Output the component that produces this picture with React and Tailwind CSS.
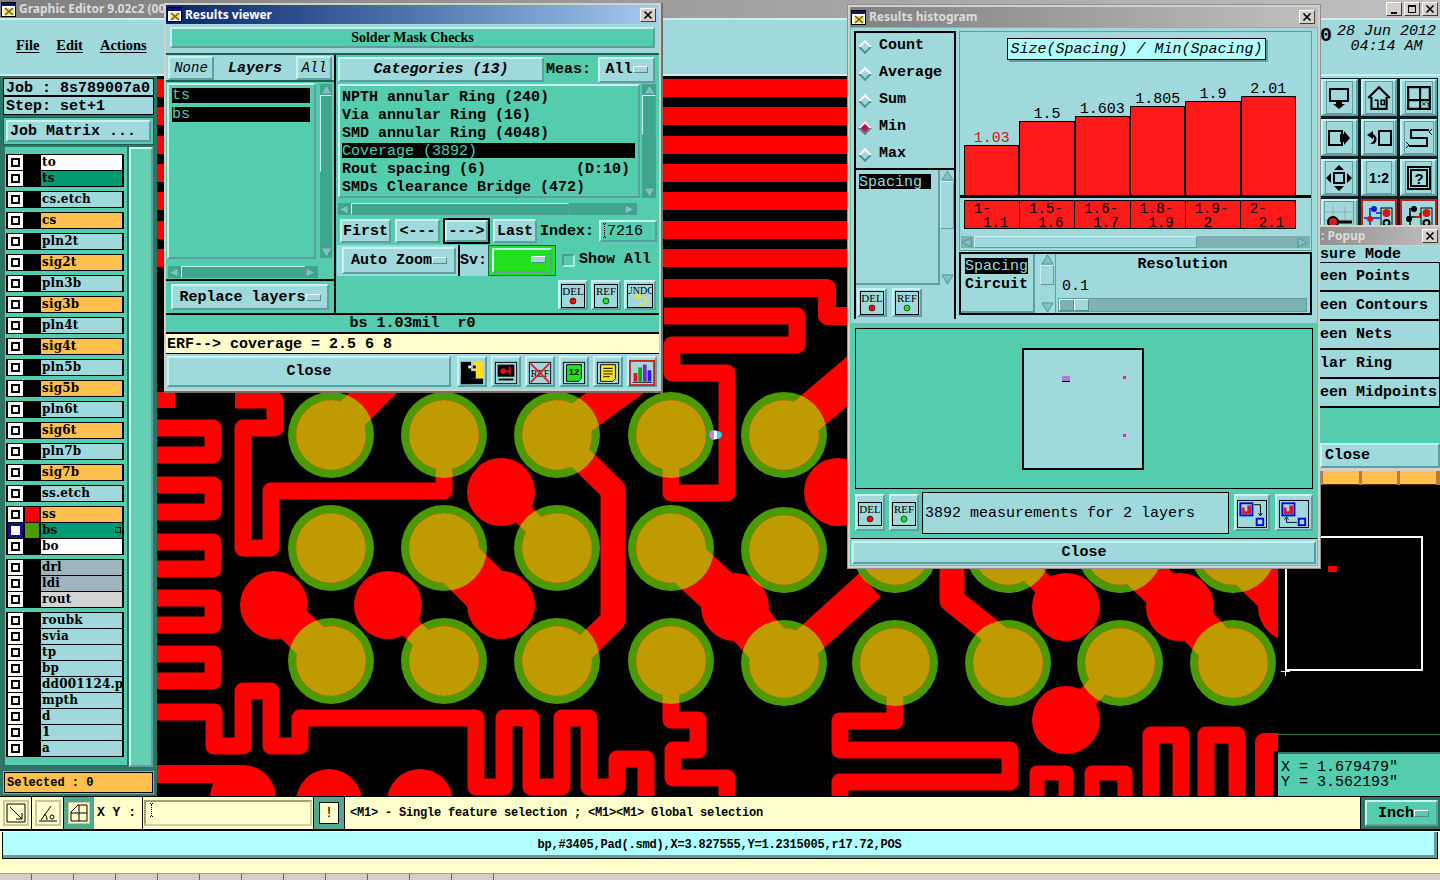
const raised = "border-2 border-t-[#c8f2f2] border-l-[#c8f2f2] border-r-[#5f9ea0] border-b-[#5f9ea0]";
const sunken = "border-2 border-t-[#4f9a8c] border-l-[#4f9a8c] border-r-[#a8ecdc] border-b-[#a8ecdc]";
const serif = "font-['Liberation_Serif',serif]";
const small = "text-[12px] tracking-[-0.2px]";

const LAYER_GROUPS = [
  [["to", "bg-white"], ["ts", "bg-[#009b73]"]],
  [["cs.etch", "bg-[#9fd9db]"]],
  [["cs", "bg-[#ffc04d]"]],
  [["pln2t", "bg-[#9fd9db]"]],
  [["sig2t", "bg-[#ffc04d]"]],
  [["pln3b", "bg-[#9fd9db]"]],
  [["sig3b", "bg-[#ffc04d]"]],
  [["pln4t", "bg-[#9fd9db]"]],
  [["sig4t", "bg-[#ffc04d]"]],
  [["pln5b", "bg-[#9fd9db]"]],
  [["sig5b", "bg-[#ffc04d]"]],
  [["pln6t", "bg-[#9fd9db]"]],
  [["sig6t", "bg-[#ffc04d]"]],
  [["pln7b", "bg-[#9fd9db]"]],
  [["sig7b", "bg-[#ffc04d]"]],
  [["ss.etch", "bg-[#9fd9db]"]],
  [["ss", "bg-[#ffc04d]", "bg-[#ff0000]"], ["bs", "bg-[#009b73]", "bg-[#4b9b00]", true], ["bo", "bg-white"]],
  [["drl", "bg-[#9fb4bc]"], ["ldi", "bg-[#9fb4bc]"], ["rout", "bg-[#d3d3d3]"]],
  [["roubk", "bg-[#9fd9db]"], ["svia", "bg-[#9fd9db]"], ["tp", "bg-[#9fd9db]"], ["bp", "bg-[#9fd9db]"], ["dd001124.phd", "bg-[#9fd9db]"], ["mpth", "bg-[#9fd9db]"], ["d", "bg-[#9fd9db]"], ["1", "bg-[#9fd9db]"], ["a", "bg-[#9fd9db]"]],
];

const BARS = [
  { top: "1.03", h: "h-[50px]", a: "1-", b: "1.1", red: true },
  { top: "1.5", h: "h-[74px]", a: "1.5-", b: "1.6" },
  { top: "1.603", h: "h-[79px]", a: "1.6-", b: "1.7" },
  { top: "1.805", h: "h-[89px]", a: "1.8-", b: "1.9" },
  { top: "1.9", h: "h-[94px]", a: "1.9-", b: "2" },
  { top: "2.01", h: "h-[99px]", a: "2-", b: "2.1" },
];

const RING_CENTERS = [
  [331, 435], [444, 435], [557, 435], [671, 435], [784, 435],
  [331, 548], [444, 548], [557, 548], [671, 548], [784, 550], [895, 550], [1008, 550], [1120, 550], [1233, 550],
  [331, 661], [444, 661], [557, 661], [671, 661], [784, 663], [895, 663], [1008, 663], [1120, 663], [1233, 663],
];

const SOLID_PADS = [[501, 492], [274, 605], [388, 605], [501, 605], [735, 607], [838, 492], [1066, 607], [1066, 720], [1180, 607], [1292, 607]];
const EDGE_PADS = [[243, 798], [329, 802], [420, 802]];

// traces: path, stroke width
const TRACES = [
  ["M157 428H213V455H157", 17],
  ["M157 485H213V512H157", 17],
  ["M157 542H213V569H157", 17],
  ["M157 598H213V625H157", 17],
  ["M157 654H213V681H157", 17],
  ["M157 400H175", 16],
  ["M235 400H275V428H243V548H271V491H444V435", 17],
  ["M157 774H240", 18],
  ["M157 712H214V746H243V691H271V746H300V718H476V787H504V718H531V787H562V718H589V787H617V759H646V796", 17],
  ["M331 435L398 368", 34],
  ["M557 435L640 375", 34],
  ["M557 435L613 490V620L557 676", 25],
  ["M501 492L557 548", 22],
  ["M274 605L331 661", 38],
  ["M388 605L444 661", 22],
  ["M444 548L501 605", 50],
  ["M671 548L735 607L784 663", 46],
  ["M784 663L870 585", 32],
  ["M784 435L870 362", 38],
  ["M664 288H827V316H850", 18],
  ["M664 316H797V345H672V373H727V493H671V435", 17],
  ["M671 661V720H698V750H673V778H727V796", 17],
  ["M895 663V721H840V750H1010V782H840V796", 17],
  ["M1037 796V773H1066V796", 15],
  ["M1092 796V773H1125V796", 15],
  ["M1151 796V735H1181V796", 17],
  ["M1206 796V735H1237V796", 17],
  ["M1264 796V742H1280", 18],
  ["M952 560V600L1008 645", 25],
  ["M1008 550L1066 607", 22],
  ["M1066 720L1120 663", 22],
  ["M1120 550L1180 607L1233 663", 40],
  ["M1233 550L1292 607", 46],
];

function RedLayer({ color }) {
  return (
    <g>
      {[79, 107, 136, 164, 192, 221, 249].map((y) => (
        <rect key={y} x="157" y={y} width="700" height="18" fill={color} />
      ))}
      {TRACES.map(([d, w]) => (
        <path key={d} d={d} fill="none" stroke={color} strokeWidth={w} strokeLinejoin="round" />
      ))}
      {RING_CENTERS.map(([x, y]) => (
        <circle key={`${x}-${y}`} cx={x} cy={y} r="35" fill={color} />
      ))}
      {SOLID_PADS.map(([x, y]) => (
        <circle key={`${x}-${y}`} cx={x} cy={y} r="34" fill={color} />
      ))}
      {EDGE_PADS.map(([x, y]) => (
        <circle key={`${x}-${y}`} cx={x} cy={y} r="33" fill={color} />
      ))}
    </g>
  );
}

function Board() {
  return (
    <svg viewBox="157 76 1121 720" className="block w-[1121px] h-[720px] bg-black">
      <defs>
        <clipPath id="rings">
          {RING_CENTERS.map(([x, y]) => (
            <circle key={`${x}-${y}`} cx={x} cy={y} r="43" />
          ))}
        </clipPath>
      </defs>
      {RING_CENTERS.map(([x, y]) => (
        <circle key={`${x}-${y}`} cx={x} cy={y} r="43" fill="#4b9b00" />
      ))}
      <RedLayer color="#ff0000" />
      <g clipPath="url(#rings)">
        <RedLayer color="#bf9a00" />
      </g>
      <circle cx="714" cy="435" r="5" fill="#c080f0" />
      <rect x="714" y="431" width="3" height="8" fill="#fff" />
      <path d="M717 431a5 4 0 0 1 0 8z" fill="#20e0f0" />
    </svg>
  );
}

function Arrow({ dir, className = "" }) {
  const d = { up: "M7 1L13 11H1z", down: "M7 11L1 1H13z", left: "M1 6L11 1V11z", right: "M11 6L1 1V11z" }[dir];
  return (
    <svg viewBox="0 0 14 12" className={`block w-[13px] h-[11px] shrink-0 ${className}`}>
      <path d={d} fill="#7cc4c0" stroke="#4f8f8f" strokeWidth="1" />
    </svg>
  );
}

function VScroll({ className = "", thumb = "flex-1" }) {
  return (
    <div className={`flex flex-col items-center w-[14px] bg-[#3fa68e] ${className}`}>
      <Arrow dir="up" />
      <div className={`w-full border border-t-[#c8f2f2] border-l-[#c8f2f2] border-r-[#5f9ea0] border-b-[#5f9ea0] ${thumb}`} />
      <div className="flex-1" />
      <Arrow dir="down" />
    </div>
  );
}

function HScroll({ className = "", thumb = "w-full", track = "bg-[#3fa68e]" }) {
  return (
    <div className={`flex items-center h-[12px] ${track} ${className}`}>
      <Arrow dir="left" />
      <div className="flex-1 h-full flex">
        <div className={`h-full border border-t-[#c8f2f2] border-l-[#c8f2f2] border-r-[#5f9ea0] border-b-[#5f9ea0] ${thumb}`} />
      </div>
      <Arrow dir="right" />
    </div>
  );
}

function Btn({ className = "", children }) {
  return <div className={`flex items-center justify-center pt-[2px] whitespace-pre bg-[#9fd9db] ${raised} ${className}`}>{children}</div>;
}

function OptionMark({ className = "bg-[#9fd9db]" }) {
  return <div className={`w-[15px] h-[7px] mb-[2px] border border-t-white border-l-white border-r-[#4f8f8f] border-b-[#4f8f8f] ${className}`} />;
}

function IBeam({ className = "h-[15px]" }) {
  return <div className={`w-[3px] shrink-0 border-y border-black border-dotted ${className}`}><div className="w-[1px] h-full ml-[1px] border-l border-dotted border-black" /></div>;
}

function CloseBox() {
  return (
    <div className="flex items-center justify-center w-[16px] h-[14px] bg-[#d4d0c8] border border-t-white border-l-white border-r-[#404040] border-b-[#404040]">
      <svg viewBox="0 0 10 10" className="block w-[10px] h-[10px]"><path d="M1.5 1.5l7 7M8.5 1.5l-7 7" stroke="#000" strokeWidth="1.6" /></svg>
    </div>
  );
}

function AppGlyph() {
  return (
    <svg viewBox="0 0 15 15" className="block w-[15px] h-[15px] shrink-0">
      <rect x="0.5" y="0.5" width="14" height="14" fill="#fff" stroke="#000" />
      <rect x="1" y="1" width="13" height="3" fill="#10107a" />
      <rect x="3" y="6" width="10" height="7" fill="#e8e08a" />
      <path d="M4 6l8 7M12 6l-8 7" stroke="#706000" strokeWidth="1.4" />
    </svg>
  );
}

function TitleBar({ text, active, className = "" }) {
  return (
    <div className={`flex items-center gap-[3px] shrink-0 pl-[1px] pr-[3px] ${active ? "bg-linear-to-r from-[#0a246a] to-[#a6caf0] text-white" : "bg-linear-to-r from-[#808080] to-[#c0c0c0] text-[#dcdcdc]"} ${className}`}>
      <AppGlyph />
      <span className="flex-1 font-['Noto_Sans',sans-serif] text-[12px] leading-[16px] font-bold whitespace-nowrap">{text}</span>
      <CloseBox />
    </div>
  );
}

function DelIcon({ label = "DEL", dot = "#ff0000" }) {
  return (
    <svg viewBox="0 0 24 24" className="block w-[24px] h-[24px]">
      <rect x="0.5" y="0.5" width="23" height="23" fill="#9fd9db" stroke="#000" />
      <text x="12" y="11" textAnchor="middle" fontSize="11" fontFamily="'Liberation Serif', serif" fontWeight="400" fill="#000">{label}</text>
      <circle cx="12" cy="17" r="3" fill={dot} stroke="#000" strokeWidth="0.6" />
    </svg>
  );
}

function UndoIcon() {
  return (
    <svg viewBox="0 0 26 24" className="block w-[26px] h-[24px]">
      <rect x="0.5" y="0.5" width="25" height="23" fill="#9fd9db" stroke="#000" />
      <text x="13" y="10" textAnchor="middle" fontSize="10" fontFamily="'Liberation Serif', serif" fontWeight="400" fill="#000">UNDO</text>
      <path d="M10 13h6a3 3 0 0 1 0 7h-4M12 11l-3 2 3 2" fill="none" stroke="#ffe020" strokeWidth="1.6" />
    </svg>
  );
}

function HistSwapIcon({ back }) {
  return (
    <svg viewBox="0 0 32 30" className="block w-[30px] h-[28px]">
      <rect x="0.5" y="0.5" width="31" height="29" fill="#9fd9db" stroke="#000" />
      <rect x="3.5" y="3.5" width="13" height="13" fill="#9fd9db" stroke="#0000d0" strokeWidth="2" />
      <path d="M5 15V8h3v4h3V6h4v9z" fill="#e01030" />
      <rect x="21" y="20" width="7" height="7" fill="none" stroke="#0000d0" strokeWidth="2" />
      {back ? (
        <path d="M19 24H8V20M6 21l2-3 2 3" fill="none" stroke="#000" />
      ) : (
        <path d="M18 5h7v12M23 14l2 3 2-3" fill="none" stroke="#000" />
      )}
    </svg>
  );
}

function ToolGlyph({ kind }) {
  const shapes = {
    person: (
      <>
        <rect x="2" y="2" width="11" height="24" fill="#000" />
        <rect x="15" y="2" width="11" height="20" fill="#ffe020" />
        <rect x="2" y="20" width="24" height="6" fill="#000" />
        <rect x="10" y="6" width="3" height="3" fill="#fff" />
        <rect x="15" y="6" width="3" height="3" fill="#000" />
        <rect x="10" y="12" width="8" height="8" fill="#000" />
      </>
    ),
    redbox: (
      <>
        <rect x="2.5" y="2.5" width="23" height="23" fill="#9fd9db" stroke="#000" />
        <rect x="5" y="5" width="18" height="13" fill="#000" />
        <circle cx="11" cy="12" r="3" fill="#ff0000" />
        <path d="M14 12h4M18 7v9" stroke="#ff0000" strokeWidth="2" />
        <path d="M6 21h16" stroke="#000" strokeWidth="2" />
      </>
    ),
    ref: (
      <>
        <rect x="2.5" y="2.5" width="23" height="23" fill="#9fd9db" stroke="#000" />
        <text x="14" y="18" textAnchor="middle" fontSize="11" fontFamily="'Liberation Serif', serif" fontWeight="400">REF</text>
        <path d="M4 4l20 20M24 4L4 24" stroke="#e02020" strokeWidth="2" />
      </>
    ),
    note: (
      <>
        <rect x="2.5" y="2.5" width="23" height="23" fill="#9fd9db" stroke="#000" />
        <path d="M6 5h16v15l-3 3H6z" fill="#20e020" stroke="#000" />
        <text x="14" y="16" textAnchor="middle" fontSize="10" fontFamily="'Liberation Sans', sans-serif" fontWeight="700">12</text>
      </>
    ),
    list: (
      <>
        <rect x="2.5" y="2.5" width="23" height="23" fill="#9fd9db" stroke="#000" />
        <path d="M6 5h16v15l-3 3H6z" fill="#ffe020" stroke="#000" />
        <path d="M9 9h10M9 12h10M9 15h10M9 18h7" stroke="#000" />
      </>
    ),
    chart: (
      <>
        <rect x="1" y="1" width="26" height="26" fill="#9fd9db" stroke="#d02020" strokeWidth="2" />
        <rect x="5" y="14" width="4" height="9" fill="#e01030" />
        <rect x="10" y="8" width="4" height="15" fill="#10a010" />
        <rect x="15" y="5" width="4" height="18" fill="#8020c0" />
        <rect x="20" y="11" width="4" height="12" fill="#2020e0" />
        <path d="M4 24h21" stroke="#000" />
      </>
    ),
  };
  return <svg viewBox="0 0 28 28" className="block w-[26px] h-[26px]">{shapes[kind]}</svg>;
}

function LayerRow({ name, bg, swatch, active }) {
  return (
    <div className="flex items-center h-[15px]">
      <div className={`flex items-center justify-center w-[15px] h-[15px] ml-[2px] ${active ? "bg-[#101090]" : "bg-white"}`}>
        <div className={`flex items-center justify-center w-[9px] h-[9px] ${active ? "bg-white" : "bg-black"}`}>
          {!active && <div className="w-[5px] h-[5px] bg-white" />}
        </div>
      </div>
      <div className={`w-[14px] h-[15px] ml-[2px] ${swatch || "bg-black"}`} />
      <div className={`relative w-[81px] h-[15px] ml-[2px] pl-[1px] overflow-hidden font-['DejaVu_Serif',serif] text-[12px] tracking-[0.2px] leading-[15px] whitespace-nowrap ${bg}`}>
        {name}
        {active && <span className="absolute right-[1px] top-[4px] w-[6px] h-[6px] border border-black" />}
      </div>
    </div>
  );
}

function LeftPanel() {
  return (
    <div className="flex flex-col w-[157px] h-[720px] bg-[#2f7565] text-[15px]">
      <div className="mx-[3px] mt-[2px] border border-black bg-[#9fd9db]">
        <div className="h-[18px] pl-[2px] leading-[20px] border-b-2 border-black whitespace-pre">Job : 8s789007a0</div>
        <div className="h-[17px] pl-[2px] pt-[2px] leading-[15px] whitespace-pre">Step: set+1</div>
      </div>
      <div className="mx-[3px] mt-[2px] p-[2px] h-[28px] bg-[#53cdad] border border-[#1f5f50]">
        <Btn className="h-full justify-start pl-[2px]">Job Matrix ...</Btn>
      </div>
      <div className="flex flex-1 mt-[2px] ml-[5px] mr-[4px]">
        <div className="flex flex-col gap-[4px] w-[122px] h-[618px] pt-[7px] px-[1px] bg-[#53cdad]">
          {LAYER_GROUPS.map((group, i) => (
            <div key={i} className="flex flex-col shrink-0 gap-[1px] py-[1px] bg-black w-[118px]">
              {group.map(([name, bg, swatch, active]) => (
                <LayerRow key={name} name={name} bg={bg} swatch={swatch} active={active} />
              ))}
            </div>
          ))}
        </div>
        <div className={`flex-1 h-[620px] ml-[2px] bg-[#64cfb2] ${raised}`} />
      </div>
      <div className="mx-[3px] mb-[2px] p-[1px] h-[23px] bg-[#53cdad]">
        <div className="flex items-center h-full pl-[2px] border border-black bg-[#ffc04d] text-[12px]">Selected : 0</div>
      </div>
    </div>
  );
}

function RightIcon({ children }) {
  return (
    <div className={`flex items-center justify-center h-[37px] bg-[#9fd9db] ${raised}`}>
      <div className="flex items-center justify-center w-full h-full m-[3px] border border-[#5f9ea0]">{children}</div>
    </div>
  );
}

function RightGrid() {
  const stroke = { fill: "none", stroke: "#000", strokeWidth: 2 };
  return (
    <div className="grid grid-cols-3 gap-[3px] w-[118px] h-[147px] overflow-hidden bg-[#102020] p-[1px]">
      <RightIcon><svg viewBox="0 0 24 24" className="w-[24px] h-[24px]"><path d="M3 3h18v12H3z" {...stroke} /><path d="M9 14h6v4h3l-6 5-6-5h3z" /></svg></RightIcon>
      <RightIcon><svg viewBox="0 0 24 24" className="w-[26px] h-[26px]"><path d="M2 12L12 2l10 10M5 11v11h14V11" {...stroke} /><path d="M8 14h3v8M14 14h3v4h-3z" {...stroke} strokeWidth="1.4" /></svg></RightIcon>
      <RightIcon><svg viewBox="0 0 24 24" className="w-[26px] h-[26px]"><path d="M2 2h20v20H2zM13 2v20M2 14h20" {...stroke} /><path d="M15 16l3 3M18 16l-3 3M19 16l1.5 1.5 1.5-1.5M20.5 17.5V20" stroke="#000" strokeWidth="0.8" fill="none" /></svg></RightIcon>
      <RightIcon><svg viewBox="0 0 24 24" className="w-[24px] h-[24px]"><path d="M2 5h13v14H2z" {...stroke} /><path d="M13 8h4V5l6 7-6 7v-3h-4z" /></svg></RightIcon>
      <RightIcon><svg viewBox="0 0 28 24" className="w-[28px] h-[24px]"><path d="M14 5h12v14H14z" {...stroke} /><path d="M8 5L2 9l6 4v-2c2 0 2 4-3 7h4c3-2 4-8-1-10z" /></svg></RightIcon>
      <RightIcon><svg viewBox="0 0 28 24" className="w-[28px] h-[24px]"><path d="M24 4H6v8h16v8H4" {...stroke} /><path d="M27 3l-3 3 3 3M1 16l3 3-3 3" fill="none" stroke="#000" /></svg></RightIcon>
      <RightIcon><svg viewBox="0 0 26 26" className="w-[26px] h-[26px]"><path d="M8 8h10v10H8z" {...stroke} /><path d="M13 0l5 5H8zM13 26l5-5H8zM0 13l5-5v10zM26 13l-5-5v10z" /></svg></RightIcon>
      <RightIcon><span className="font-['Liberation_Sans',sans-serif] text-[14px] font-bold leading-none">1:2</span></RightIcon>
      <RightIcon><svg viewBox="0 0 24 24" className="w-[24px] h-[24px]"><path d="M1 1h22v22H1zM4 4h16v16H4z" {...stroke} /><text x="12" y="18" textAnchor="middle" fontSize="15" fontFamily="'Liberation Sans', sans-serif" fontWeight="700">?</text></svg></RightIcon>
      <RightIcon><svg viewBox="0 0 28 24" className="w-[28px] h-[24px]"><path d="M0 6h28M0 14h28M8 0v24M20 0v24" stroke="#8fb0b0" /><circle cx="8" cy="16" r="5" fill="#d02020" stroke="#000" strokeWidth="2" /><path d="M13 16h14" stroke="#000" strokeWidth="3" /></svg></RightIcon>
      <div className="flex items-center justify-center h-[37px] bg-[#9fd9db] border-2 border-[#c02020]"><svg viewBox="0 0 30 26" className="w-[30px] h-[26px]"><path d="M6 3v20M0 13h16M12 8h8" stroke="#0020d0" strokeWidth="1.5" /><circle cx="6" cy="14" r="3" fill="#e01010" /><circle cx="10" cy="4" r="3" fill="#1010e0" /><rect x="17" y="3" width="11" height="22" fill="#9fd9db" stroke="#000" /><circle cx="22.5" cy="8" r="4" fill="#e01010" /><circle cx="22.5" cy="18" r="3" fill="none" stroke="#000" strokeWidth="2" /></svg></div>
      <div className="flex items-center justify-center h-[37px] bg-[#9fd9db] border-2 border-[#c02020]"><svg viewBox="0 0 30 26" className="w-[30px] h-[26px]"><path d="M6 3v20M3 12h10" stroke="#000" strokeWidth="1.5" /><circle cx="5" cy="14" r="3" fill="#000" /><circle cx="10" cy="4" r="3" fill="#000" /><path d="M11 12h5V8" stroke="#e01010" strokeWidth="2" fill="none" /><rect x="17" y="3" width="11" height="22" fill="#9fd9db" stroke="#000" /><circle cx="22.5" cy="8" r="4" fill="#e01010" /><circle cx="22.5" cy="18" r="3" fill="none" stroke="#000" strokeWidth="2" /></svg></div>
    </div>
  );
}

function RightPanel() {
  return (
    <div className="flex flex-col w-[162px] h-[720px]">
      <div className="flex flex-col flex-1 bg-[#9fd9db] border-t-2 border-[#9fd9db] pl-[42px]">
        <RightGrid />
        <div className="flex-1" />
        <div className="flex gap-[3px] h-[15px] bg-[#c07a30] pl-[3px] pr-[4px]">
          <div className="flex-1 bg-[#ffc04d] border-b border-[#503000]" />
          <div className="flex-1 bg-[#ffc04d] border-b border-[#503000]" />
          <div className="flex-1 bg-[#ffc04d] border-b border-[#503000]" />
        </div>
      </div>
      <div className="relative h-[267px] shrink-0 bg-black border-b-0">
        <div className="absolute left-[7px] top-[51px] w-[138px] h-[135px] border-2 border-white" />
        <div className="absolute left-[50px] top-[81px] w-[9px] h-[6px] bg-[#ff0000]" />
        <div className="absolute left-[3px] top-[186px] w-[9px] h-[1px] bg-white" />
        <div className="absolute left-[7px] top-[182px] w-[1px] h-[9px] bg-white" />
        <div className="absolute left-0 right-0 top-[249px] h-[1px] bg-[#2f7565]" />
      </div>
      <div className="flex flex-col justify-center h-[44px] shrink-0 pl-[3px] border-t-2 border-[#2f7565] bg-[#53cdad] text-[15px] font-normal leading-[15px] whitespace-pre">
        <div>X = 1.679479"</div>
        <div>Y = 3.562193"</div>
      </div>
    </div>
  );
}

function ResultsViewer() {
  return (
    <div className="absolute left-[164px] top-[3px] flex flex-col w-[499px] h-[390px] p-[2px] bg-[#d4d0c8] border-r-2 border-b-2 border-[#707070]">
      <TitleBar text="Results viewer" active className="h-[19px]" />
      <div className="flex flex-col flex-1 bg-[#9fd9db]">
        <div className="h-[31px] shrink-0 p-[4px] pt-[3px] pb-[5px] bg-[#9fd9db] border-b-2 border-[#1f5f50]">
          <div className={`flex items-center justify-center h-full bg-[#53cdad] ${raised} ${serif} text-[14px]`}>Solder Mask Checks</div>
        </div>
        <div className="flex h-[258px] shrink-0">
          <div className="flex flex-col w-[170px] bg-[#53cdad] border-r-2 border-black">
            <div className="flex h-[27px] shrink-0 bg-[#9fd9db] border-b-2 border-[#1f5f50] px-[2px] items-center gap-[3px] italic font-normal">
              <Btn className="w-[46px] h-[24px] text-[14px]">None</Btn>
              <div className="flex-1 pt-[4px] text-center font-bold text-[15px]">Layers</div>
              <Btn className="w-[36px] h-[24px] text-[14px]">All</Btn>
            </div>
            <div className="flex flex-1 pl-[1px] pt-[1px]">
              <div className={`flex flex-col w-[150px] h-[176px] pl-[3px] pr-[4px] pt-[3px] gap-[4px] ${raised} border-l-[#3fa68e] border-t-[#3fa68e] font-normal`}>
                <div className="h-[15px] leading-[15px] bg-black text-[#53cdad]">ts</div>
                <div className="h-[15px] leading-[15px] bg-black text-[#53cdad]">bs</div>
              </div>
              <VScroll className="ml-[3px] mr-[1px] h-[176px] border border-[#53cdad]" thumb="flex-1" />
            </div>
            <HScroll className="w-[150px] ml-[2px] mb-[1px] h-[12px] shrink-0" thumb="w-full" />
            <div className="h-[34px] shrink-0 border-t-2 border-black px-[5px] py-[3px]">
              <Btn className="h-full justify-between px-[4px]"><span>Replace layers</span><OptionMark /></Btn>
            </div>
          </div>
          <div className="flex flex-col flex-1 bg-[#53cdad]">
            <div className="flex items-center h-[29px] shrink-0 pl-[2px] pr-[4px]">
              <Btn className="w-[206px] h-[25px] italic">Categories (13)</Btn>
              <span className="ml-[2px] pt-[2px] w-[52px]">Meas:</span>
              <Btn className="flex-1 h-[26px] justify-between px-[4px]"><span>All</span><OptionMark /></Btn>
            </div>
            <div className="flex h-[114px] shrink-0 pl-[2px] pr-[3px]">
              <div className={`flex-1 pl-[2px] pt-[3px] ${raised} border-l-[#3fa68e] border-t-[#3fa68e] leading-[18px] whitespace-pre`}>
                <div>NPTH annular Ring (240)</div>
                <div>Via annular Ring (16)</div>
                <div>SMD annular Ring (4048)</div>
                <div className="bg-black text-[#53cdad] font-normal w-[293px] h-[15px] mb-[3px]">Coverage (3892)</div>
                <div>Rout spacing (6)          (D:10)</div>
                <div>SMDs Clearance Bridge (472)</div>
              </div>
              <VScroll className="ml-[2px]" thumb="h-[40px]" />
            </div>
            <HScroll className="shrink-0 ml-[2px] mt-[5px] mr-[22px]" thumb="w-[80%]" />
            <div className="flex items-center h-[28px] gap-[3px] shrink-0 pl-[4px] mt-[2px]">
              <Btn className="w-[51px] h-[24px]">First</Btn>
              <Btn className="w-[45px] h-[24px] ml-[1px]">{"<---"}</Btn>
              <div className="w-[47px] h-[26px] border-2 border-black"><Btn className="h-full">---&gt;</Btn></div>
              <Btn className="w-[44px] h-[24px]">Last</Btn>
              <span className="pt-[2px] whitespace-pre">Index:</span>
              <div className={`flex items-start gap-[1px] w-[58px] h-[22px] ml-[2px] ${raised} border-l-[#3fa68e] border-t-[#3fa68e] pl-[2px] pt-[1px] leading-[17px] font-normal`}><IBeam />7216</div>
            </div>
            <div className="flex items-center h-[31px] shrink-0 pl-[1px]">
              <div className="flex items-center h-full bg-[#9fd9db] border-r-2 border-black pr-[2px] pl-[5px]">
                <Btn className="w-[114px] h-[27px] justify-between px-[4px]"><span>Auto Zoom</span><OptionMark /></Btn>
              </div>
              <span className="flex items-center h-full w-[28px] pt-[2px] bg-[#9fd9db]">Sv:</span>
              <div className="flex items-center justify-center w-[68px] h-full bg-[#20e020] border border-[#1f5f50]">
                <div className={`flex items-center justify-end w-[60px] h-[25px] pr-[4px] ${raised} bg-[#20e020]`}><OptionMark /></div>
              </div>
              <div className={`w-[13px] h-[13px] ml-[6px] ${sunken}`} />
              <span className="ml-[4px] whitespace-pre">Show All</span>
            </div>
            <div className="flex flex-1 justify-end items-center gap-[3px] pr-[3px]">
              <Btn className="w-[30px] h-[30px] pt-0"><DelIcon /></Btn>
              <Btn className="w-[30px] h-[30px] pt-0"><DelIcon label="REF" dot="#20e020" /></Btn>
              <Btn className="w-[32px] h-[30px] pt-0"><UndoIcon /></Btn>
            </div>
          </div>
        </div>
        <div className="flex items-center justify-center h-[21px] shrink-0 pt-[2px] bg-[#53cdad] border-y-2 border-black whitespace-pre">bs 1.03mil  r0</div>
        <div className="flex items-center h-[20px] shrink-0 pl-[1px] pt-[3px] bg-[#ffffcc] border-b border-black whitespace-pre">ERF--&gt; coverage = 2.5 6 8</div>
        <div className="flex flex-1 items-center gap-[4px] pl-[1px] pr-[2px]">
          <Btn className="w-[288px] h-[31px] mr-[2px]">Close</Btn>
          {["person", "redbox", "ref", "note", "list", "chart"].map((kind) => (
            <Btn key={kind} className="w-[30px] h-[31px] pt-0"><ToolGlyph kind={kind} /></Btn>
          ))}
        </div>
      </div>
    </div>
  );
}

function Radio({ label, checked }) {
  return (
    <div className="flex items-center shrink-0 h-[27px] pl-[4px] gap-[9px] whitespace-pre">
      <div className={`w-[10px] h-[10px] rotate-45 border-2 border-t-white border-l-white border-r-[#4f8f8f] border-b-[#4f8f8f] ${checked ? "bg-[#c0104e]" : "bg-[#9fd9db]"}`} />
      {label}
    </div>
  );
}

function ResultsHistogram() {
  return (
    <div className="absolute left-[847px] top-[4px] flex flex-col w-[474px] h-[565px] p-[2px] bg-[#d4d0c8] border border-[#909090]">
      <TitleBar text="Results histogram" className="h-[20px]" />
      <div className="flex flex-col flex-1 bg-[#53cdad] p-[1px]">
        <div className="flex h-[293px] shrink-0 bg-[#9fd9db] pl-[3px] pr-[5px] pt-[3px] gap-[3px]">
          <div className="flex flex-col w-[102px] border-2 border-black border-b-0 h-[288px]">
            <div className="flex flex-col h-[137px] shrink-0 border-b-2 border-black">
              <Radio label="Count" />
              <Radio label="Average" />
              <Radio label="Sum" />
              <Radio label="Min" checked />
              <Radio label="Max" />
            </div>
            <div className="flex h-[115px] shrink-0">
              <div className={`flex-1 pl-[3px] pt-[4px] ${raised} border-t-0 border-l-0`}>
                <div className="w-[72px] h-[15px] leading-[17px] bg-black text-[#9fd9db] font-normal">Spacing</div>
              </div>
              <VScroll className="bg-[#9fd9db]" thumb="flex-1" />
            </div>
            <div className="flex flex-1 items-center gap-[5px] pl-[1px]">
              <Btn className="w-[30px] h-[29px] pt-0"><DelIcon /></Btn>
              <Btn className="w-[30px] h-[29px] pt-0"><DelIcon label="REF" dot="#20e020" /></Btn>
            </div>
          </div>
          <div className="flex flex-col flex-1 h-[288px]">
            <div className="flex flex-col h-[220px] shrink-0 border border-[#5f9ea0] px-[4px]">
              <div className="self-center ml-[2px] mt-[6px] w-[259px] h-[22px] flex items-center justify-center pt-[2px] border border-black bg-[#b2ffff] italic font-normal text-[15px] shadow-[2px_2px_0_#5f9ea0] whitespace-pre shrink-0">Size(Spacing) / Min(Spacing)</div>
              <div className="flex items-end h-[135px] shrink-0 w-[332px]">
                {BARS.map((bar) => (
                  <div key={bar.top} className="flex flex-col items-center flex-1">
                    <span className={`leading-[12px] font-normal ${bar.red ? "text-[#e01010]" : ""}`}>{bar.top}</span>
                    <div className={`w-full border border-black border-b-0 bg-[#ff1a1a] ${bar.h}`} />
                  </div>
                ))}
              </div>
              <div className="-mx-[4px] h-[3px] bg-black shrink-0" />
              <div className="flex shrink-0 w-[332px] h-[29px] mt-[2px] border border-black bg-[#ff1a1a]">
                {BARS.map((bar) => (
                  <div key={bar.b} className="flex-1 h-[27px] border-r border-black last:border-r-0 text-[14px] font-normal leading-[14px] pl-[9px] pt-[1px] whitespace-pre">
                    <div>{bar.a}</div>
                    <div className="ml-[9px]">{bar.b}</div>
                  </div>
                ))}
              </div>
              <HScroll className="-mx-[3px] mt-[7px] shrink-0" track="bg-[#7fb0b2]" thumb="w-[69%] bg-[#9fd9db]" />
            </div>
            <div className="flex h-[63px] mt-[1px] border-2 border-black">
              <div className={`w-[74px] pl-[4px] pt-[4px] leading-[18px] ${raised} border-l-0 border-t-0`}>
                <div className="bg-black text-[#9fd9db] font-normal w-[63px] h-[16px] leading-[17px] mb-[2px]">Spacing</div>
                <div>Circuit</div>
              </div>
              <VScroll className="ml-[5px] mr-[1px] bg-[#9fd9db]" thumb="flex-1" />
              <div className="flex flex-col flex-1 pl-[2px] pr-[3px] border-l border-[#5f9ea0]">
                <div className="text-center leading-[19px] pt-[1px]">Resolution</div>
                <div className="pl-[4px] leading-[20px] mt-[2px] pt-[1px] font-normal">0.1</div>
                <div className="flex h-[14px] mt-[1px] bg-[#7fb0b2] border border-[#5f9ea0]">
                  <div className="w-[15px] h-full border border-t-white border-l-white border-r-[#4f8f8f] border-b-[#4f8f8f]" />
                  <div className="w-[15px] h-full border border-t-white border-l-white border-r-[#4f8f8f] border-b-[#4f8f8f] bg-[#9fd9db]" />
                </div>
              </div>
            </div>
          </div>
        </div>
        <div className="flex flex-col flex-1 bg-[#53cdad] border-t-2 border-[#9fd9db]">
          <div className="h-[161px] shrink-0 mx-[4px] mt-[5px] pt-[1px] pr-[2px] border border-black flex items-center justify-center">
            <div className="relative w-[122px] h-[122px] border-2 border-black bg-[#9fd9db]">
              <div className="absolute left-[38px] top-[26px] w-[8px] h-[6px] border-b border-black bg-[#c040d0]/60" />
              <div className="absolute left-[99px] top-[26px] w-[3px] h-[3px] bg-[#d020d0]" />
              <div className="absolute left-[99px] top-[84px] w-[3px] h-[3px] bg-[#d020d0]" />
            </div>
          </div>
          <div className="flex items-start h-[49px] shrink-0 pt-[3px] pl-[4px] pr-[4px] gap-[4px]">
            <Btn className="w-[30px] h-[37px] mt-[2px] pt-0"><DelIcon /></Btn>
            <Btn className="w-[30px] h-[37px] mt-[2px] pt-0"><DelIcon label="REF" dot="#20e020" /></Btn>
            <div className="flex items-center w-[307px] h-[42px] ml-[-1px] pl-[2px] pt-[3px] bg-[#9fd9db] border border-black font-normal whitespace-pre">3892 measurements for 2 layers</div>
            <Btn className="w-[36px] h-[37px] ml-[1px] mt-[2px] pt-0"><HistSwapIcon /></Btn>
            <Btn className="w-[38px] h-[37px] ml-[1px] mt-[2px] pt-0"><HistSwapIcon back /></Btn>
          </div>
          <div className="flex-1 bg-[#9fd9db] border-t border-black p-[1px] pt-[2px]">
            <Btn className="h-[23px]">Close</Btn>
          </div>
        </div>
      </div>
    </div>
  );
}

function PopupWindow() {
  return (
    <div className="absolute left-[1320px] top-[225px] flex flex-col w-[120px] h-[246px] pt-[2px] bg-[#d4d0c8]">
      <div className="flex items-center justify-between h-[18px] pl-[1px] pr-[2px] bg-linear-to-r from-[#909090] to-[#c0c0c0] text-[#dcdcdc] font-['Noto_Sans',sans-serif] text-[12px] font-bold">
        <span className="whitespace-pre">: Popup</span>
        <CloseBox />
      </div>
      <div className="flex flex-col flex-1 bg-[#53cdad] mt-[1px]">
        <div className="h-[17px] pt-[1px] bg-[#9fd9db] border-b border-black leading-[15px] whitespace-pre">sure Mode</div>
        {["een Points", "een Contours", "een Nets", "lar Ring", "een Midpoints"].map((label) => (
          <div key={label} className="h-[29px] flex items-center pt-[2px] bg-[#9fd9db] border-b-2 border-r border-black whitespace-pre">{label}</div>
        ))}
        <div className="flex-1" />
        <Btn className="h-[25px] justify-start pl-[3px]">Close</Btn>
        <div className="h-[3px] bg-[#d4d0c8]" />
      </div>
    </div>
  );
}

function BottomBars() {
  const strokes = { fill: "none", stroke: "#000", strokeWidth: 1 };
  return (
    <>
      <div className="flex h-[33px] shrink-0 bg-[#ffffcc] border-t border-black">
        <div className="flex items-center justify-center w-[32px] border-r border-black"><div className="flex items-center justify-center w-[26px] h-[26px] border-2 border-[#c8c8a0]"><svg viewBox="0 0 20 20" className="w-[20px] h-[20px]"><path d="M1 1h18v18H1zM4 4l12 12M16 10v6h-6" {...strokes} /></svg></div></div>
        <div className="flex items-center justify-center w-[32px] border-r border-black"><div className="flex items-center justify-center w-[26px] h-[26px] border-2 border-[#c8c8a0]"><svg viewBox="0 0 20 20" className="w-[20px] h-[20px]"><path d="M1 18h18M3 17L13 3M9 17c0-3-1-5-3-6" {...strokes} /><circle cx="14" cy="14" r="2" {...strokes} /></svg></div></div>
        <div className="flex items-center justify-center w-[30px] bg-[#53a990]"><div className="flex items-center justify-center w-[22px] h-[22px] bg-[#ffffcc] border border-[#c8c8a0]"><svg viewBox="0 0 18 18" className="w-[18px] h-[18px]"><path d="M1 8L8 1h9v16H1zM9 1v16M1 9h16" {...strokes} /></svg></div></div>
        <span className="flex items-center w-[48px] pl-[3px] text-[13px] font-bold whitespace-pre">X Y :</span>
        <div className="flex items-center w-[172px] p-[1px] border-l border-black border-r">
          <div className="w-full h-[26px] pl-[4px] pt-[1px] border-2 border-t-[#a0a070] border-l-[#a0a070] border-r-[#d0d0a0] border-b-[#d0d0a0]"><IBeam className="h-[14px]" /></div>
        </div>
        <div className="flex items-center justify-center w-[30px] bg-[#53a990]"><div className="flex items-center justify-center w-[20px] h-[22px] bg-[#ffffcc] border border-black font-normal leading-none">!</div></div>
        <span className={`flex flex-1 items-center pl-[5px] border-l border-black whitespace-pre ${small}`}>{"<M1> - Single feature selection ; <M1><M1> Global selection"}</span>
        <div className="flex items-center justify-center w-[80px] bg-[#2f7565] border-l border-black pl-[2px]">
          <Btn className="w-[73px] h-[26px] justify-between pl-[8px] pr-[4px] bg-[#53cdad]"><span>Inch</span><OptionMark className="bg-[#53cdad]" /></Btn>
        </div>
      </div>
      <div className="flex items-center h-[30px] shrink-0 px-[2px] bg-[#ffffcc] border-t-2 border-black">
        <div className="flex items-center justify-center w-full h-[27px] pr-[1px] bg-[#b2ffff] border border-black border-t-0 shadow-[inset_-3px_-3px_0_#5f9ea0] whitespace-pre text-[12px] tracking-[-0.2px]">bp,#3405,Pad(.smd),X=3.827555,Y=1.2315005,r17.72,POS</div>
      </div>
      <div className="h-[14px] shrink-0 bg-[#ffffcc]" />
      <div className="flex flex-1 gap-[10px] border-t border-[#a0a0a0] bg-[#d4d0c8]">
        {[0, 1, 2, 3, 4, 5, 6, 7, 8, 9, 10, 11].map((i) => (
          <div key={i} className="w-[32px] border-r border-[#606060]" />
        ))}
      </div>
    </>
  );
}

export default function App() {
  return (
    <div className="relative flex flex-col w-[1440px] h-[880px] overflow-hidden bg-[#ffffcc] text-black text-[15px] font-bold font-['Liberation_Mono',monospace]">
      <div className="flex items-center h-[18px] shrink-0 pl-[1px] gap-[3px] bg-linear-to-r from-[#808080] to-[#c0c0c0] text-[#dcdcdc]">
        <AppGlyph />
        <span className="flex-1 font-['Noto_Sans',sans-serif] text-[12px] font-bold leading-none">Graphic Editor 9.02c2 (00</span>
        <div className="flex gap-[2px] pr-[2px] text-black font-normal">
          <div className="flex items-end justify-center w-[16px] h-[14px] bg-[#d4d0c8] border border-t-white border-l-white border-r-[#404040] border-b-[#404040]"><div className="w-[6px] h-[2px] mb-[1px] bg-black" /></div>
          <div className="flex items-center justify-center w-[16px] h-[14px] bg-[#d4d0c8] border border-t-white border-l-white border-r-[#404040] border-b-[#404040]"><div className="w-[8px] h-[8px] border border-black border-t-2" /></div>
          <CloseBox />
        </div>
      </div>
      <div className="flex h-[58px] shrink-0 bg-[#9fd9db] border-t-2 border-b-2 border-[#c8f2f2]">
        <div className={`flex items-center gap-[17px] pl-[16px] pb-[2px] ${serif} text-[14.5px]`}>
          <span className="underline underline-offset-2">File</span>
          <span className="underline underline-offset-2">Edit</span>
          <span className="underline underline-offset-2">Actions</span>
        </div>
        <div className="flex-1" />
        <div className="flex w-[120px] pt-[3px] italic font-normal leading-[15px] whitespace-pre">
          <span className="w-[12px] text-[20px] leading-[26px] not-italic font-bold">0</span>
          <div className="flex flex-col flex-1 items-center pl-[1px] pt-[1px]">
            <span>28 Jun 2012</span>
            <span>04:14 AM</span>
          </div>
        </div>
      </div>
      <div className="flex h-[720px] shrink-0">
        <LeftPanel />
        <Board />
        <RightPanel />
      </div>
      <BottomBars />
      <ResultsViewer />
      <ResultsHistogram />
      <PopupWindow />
    </div>
  );
}
